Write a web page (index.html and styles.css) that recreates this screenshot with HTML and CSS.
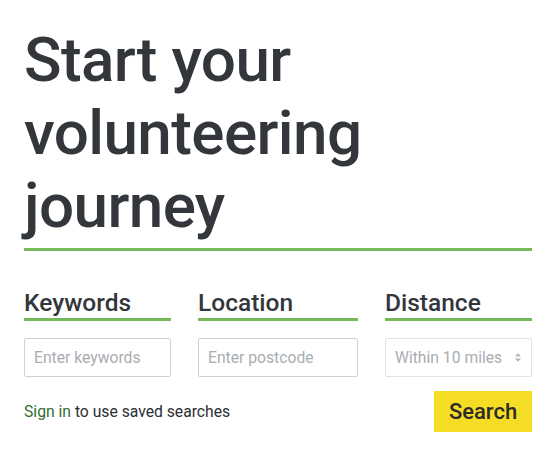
FILE: index.html
```html
<!DOCTYPE html>
<html lang="en">
<head>
<meta charset="utf-8">
<title>Start your volunteering journey</title>
<link rel="stylesheet" href="styles.css">
</head>
<body>
<main class="panel">
  <h1 class="title">Start your<br>volunteering<br>journey</h1>
  <form class="search-form">
    <div class="field">
      <label class="field-label" for="kw">Keywords</label>
      <input class="field-input" id="kw" type="text" placeholder="Enter keywords">
    </div>
    <div class="field">
      <label class="field-label" for="loc">Location</label>
      <input class="field-input" id="loc" type="text" placeholder="Enter postcode">
    </div>
    <div class="field">
      <label class="field-label" for="dist">Distance</label>
      <div class="select-box" id="dist">
        <span class="select-value">Within 10 miles</span>
        <svg class="select-arrows" width="6" height="9" viewBox="0 0 6 9"><path d="M3 0 L6 3.4 H0 Z M3 9 L6 5.6 H0 Z" fill="#b5b9bd"/></svg>
      </div>
    </div>
  </form>
  <div class="actions">
    <p class="signin"><a class="signin-link" href="#">Sign in</a> to use saved searches</p>
    <button class="search-btn" type="button">Search</button>
  </div>
</main>
</body>
</html>
```
FILE: styles.css
```css
* { box-sizing: border-box; }
html, body { margin: 0; padding: 0; background: #fff; }
body { font-family: Roboto, "Noto Sans", sans-serif; color: #35393d; }

.panel {
  width: 508px;
  margin-left: 24px;
  padding-top: 23px;
}

.title {
  margin: 0;
  font-size: 62px;
  line-height: 73px;
  letter-spacing: -0.6px;
  font-weight: 500;
  color: #33373b;
  padding-bottom: 6px;
  border-bottom: 3px solid #76b95b;
}

.search-form {
  display: grid;
  grid-template-columns: 147px 160px 147px;
  column-gap: 27px;
  margin-top: 39px;
}

.field { display: flex; flex-direction: column; }

.field-label {
  font-size: 24.5px;
  line-height: 26px;
  font-weight: 500;
  color: #33373b;
  border-bottom: 3px solid #76b95b;
  padding-bottom: 2px;
}

.field-input, .select-box {
  margin-top: 17px;
  height: 39px;
  border: 1px solid #cfd2d5;
  border-radius: 2px;
  padding: 0 9px;
  font-family: Roboto, sans-serif;
  font-size: 15.7px;
  color: #35393d;
  background: #fff;
}
.field-input::placeholder { color: #a9adb2; }

.select-box {
  display: flex;
  align-items: center;
  justify-content: space-between;
  border-color: #e0e2e4;
  padding: 0 10px 0 9px;
}
.select-value { color: #a9adb2; }

.actions {
  display: flex;
  justify-content: space-between;
  align-items: center;
  margin-top: 14px;
}

.signin {
  margin: 0;
  font-size: 15.7px;
  color: #2b2f33;
}
.signin-link { color: #2f6e2f; text-decoration: none; }

.search-btn {
  width: 98px;
  height: 41px;
  border: none;
  background: #f5dc25;
  font-family: Roboto, sans-serif;
  font-size: 22px;
  font-weight: 500;
  color: #2b2b28;
  padding: 0;
  cursor: pointer;
}
```
